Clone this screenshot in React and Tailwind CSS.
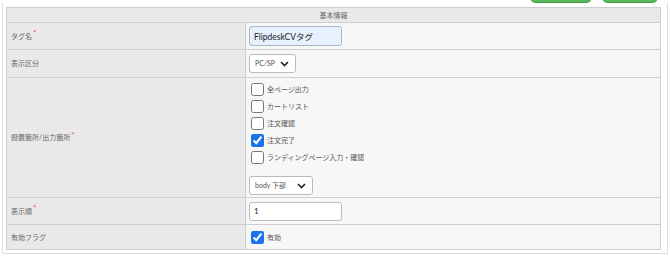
import React from "react";

const font = { fontFamily: "Lato, 'Noto Sans CJK JP', sans-serif" };

const Req = () => (
  <span className="text-[#e55353] text-[8px] leading-none relative -top-[3px] ml-[1px]">*</span>
);

const Chevron = () => (
  <svg width="9" height="6" viewBox="0 0 9 6" className="shrink-0">
    <path d="M1 1l3.5 3.5L8 1" fill="none" stroke="#222" strokeWidth="1.6" />
  </svg>
);

const Select = ({ value, width }) => (
  <div
    className={`${width} h-[19px] bg-white border border-[#bbb] rounded-[3px] pl-[5px] pr-[6px] flex items-center justify-between text-[7px] text-[#555]`}
  >
    <span>{value}</span>
    <Chevron />
  </div>
);

const Check = ({ label, checked }) => (
  <label className="flex items-center gap-[3px] h-[17px]">
    <input
      type="checkbox"
      defaultChecked={checked}
      className="w-[13px] h-[13px] ml-[2px] accent-[#1a73e8]"
    />
    <span className="text-[7px] text-[#555]">{label}</span>
  </label>
);

const Row = ({ label, req, height, last, children }) => (
  <div className={`flex ${height} ${last ? "" : "border-b border-[#cfcfcf]"}`}>
    <div className="w-[239px] shrink-0 bg-[#e9e9e9] border-r border-[#cfcfcf] flex items-center pl-[4px] text-[7px] text-[#666]">
      {label}
      {req && <Req />}
    </div>
    <div className="flex-1 bg-[#f7f7f7] flex items-center pl-[3px]">{children}</div>
  </div>
);

export default function App() {
  const places = [
    ["全ページ出力", false],
    ["カートリスト", false],
    ["注文確認", false],
    ["注文完了", true],
    ["ランディングページ入力・確認", false],
  ];

  return (
    <div className="w-[670px] h-[257px] bg-white overflow-hidden" style={font}>
      <div className="flex justify-end gap-[10px] pr-[12px] -mt-[18px] h-[21px]">
        <div className="w-[62px] h-[21px] bg-[#5cb85c] border-b border-[#3f9b3f] rounded-[6px]" />
        <div className="w-[56px] h-[21px] bg-[#5cb85c] border-b border-[#3f9b3f] rounded-[6px]" />
      </div>
      <div className="mx-[2px] border-x border-b border-[#dcdcdc] pl-[3px] pr-[6px] pt-[4px] pb-[3px]">
        <div className="border border-[#cfcfcf]">
          <div className="h-[15px] bg-[#e9e9e9] border-b border-[#cfcfcf] flex items-center justify-center text-[7px] text-[#666]">
            基本情報
          </div>
          <Row label="タグ名" req height="h-[27px]">
            <input
              defaultValue="FlipdeskCVタグ"
              className="w-[93px] h-[20px] bg-[#e8f0fe] border border-[#a9b4c4] rounded-[3px] px-[4px] text-[8.5px] text-[#222] outline-none"
            />
          </Row>
          <Row label="表示区分" height="h-[28px]">
            <Select value="PC/SP" width="w-[47px]" />
          </Row>
          <Row label="設置箇所/出力箇所" req height="h-[120px]">
            <div className="flex flex-col pt-[1px]">
              <div className="flex flex-col">
                {places.map(([l, c]) => (
                  <Check key={l} label={l} checked={c} />
                ))}
              </div>
              <div className="mt-[10px]">
                <Select value="body 下部" width="w-[64px]" />
              </div>
            </div>
          </Row>
          <Row label="表示順" req height="h-[27px]">
            <input
              defaultValue="1"
              className="w-[93px] h-[19px] bg-white border border-[#bbb] rounded-[3px] px-[4px] text-[8px] text-[#222] outline-none"
            />
          </Row>
          <Row label="有効フラグ" height="h-[24px]" last>
            <Check label="有効" checked />
          </Row>
        </div>
      </div>
    </div>
  );
}
